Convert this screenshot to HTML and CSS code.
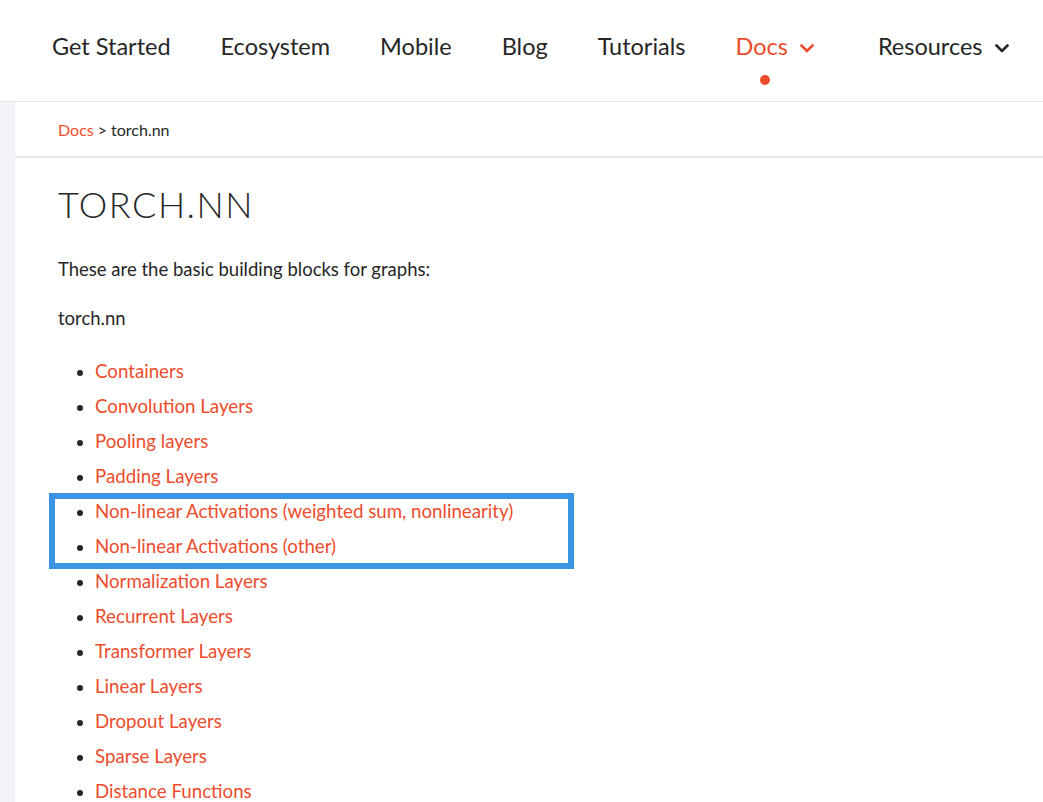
FILE: index.html
```html
<!DOCTYPE html>
<html lang="en">
<head>
<meta charset="utf-8">
<title>torch.nn</title>
<link rel="stylesheet" href="styles.css">
</head>
<body>
<header class="site-header">
  <nav class="main-nav">
    <a class="nav-link" href="#">Get Started</a>
    <a class="nav-link" href="#">Ecosystem</a>
    <a class="nav-link" href="#">Mobile</a>
    <a class="nav-link" href="#">Blog</a>
    <a class="nav-link" href="#">Tutorials</a>
    <a class="nav-link nav-active has-menu" href="#">Docs
      <svg class="chev" viewBox="0 0 14 9" width="14" height="9"><path d="M1.5 1.5 L7 7 L12.5 1.5" fill="none" stroke="currentColor" stroke-width="2.6" stroke-linecap="round" stroke-linejoin="round"/></svg>
      <span class="active-dot"></span>
    </a>
    <a class="nav-link has-menu res" href="#">Resources
      <svg class="chev" viewBox="0 0 14 9" width="14" height="9"><path d="M1.5 1.5 L7 7 L12.5 1.5" fill="none" stroke="currentColor" stroke-width="2.6" stroke-linecap="round" stroke-linejoin="round"/></svg>
    </a>
  </nav>
</header>
<div class="page">
  <aside class="side-strip"></aside>
  <main class="content">
    <div class="breadcrumb"><a href="#" class="crumb-link">Docs</a> &gt; torch.nn</div>
    <article class="article">
      <h1 class="title">TORCH.NN</h1>
      <p class="lead">These are the basic building blocks for graphs:</p>
      <p class="module">torch.nn</p>
      <ul class="toc">
        <li><a href="#">Containers</a></li>
        <li><a href="#">Convolution Layers</a></li>
        <li><a href="#">Pooling layers</a></li>
        <li><a href="#">Padding Layers</a></li>
        <li><a href="#">Non-linear Activations (weighted sum, nonlinearity)</a></li>
        <li><a href="#">Non-linear Activations (other)</a></li>
        <li><a href="#">Normalization Layers</a></li>
        <li><a href="#">Recurrent Layers</a></li>
        <li><a href="#">Transformer Layers</a></li>
        <li><a href="#">Linear Layers</a></li>
        <li><a href="#">Dropout Layers</a></li>
        <li><a href="#">Sparse Layers</a></li>
        <li><a href="#">Distance Functions</a></li>
      </ul>
      <div class="highlight-box"></div>
    </article>
  </main>
</div>
</body>
</html>
```

FILE: styles.css
```css
html, body {
  margin: 0;
  padding: 0;
  background: #ffffff;
  font-family: Lato, "Noto Sans", sans-serif;
  color: #262626;
  overflow: hidden;
  height: 802px;
}

a { text-decoration: none; }

.site-header {
  height: 101px;
  border-bottom: 1px solid #e4e4e4;
  box-sizing: content-box;
}

.main-nav {
  display: flex;
  align-items: center;
  height: 101px;
  padding-left: 52px;
  gap: 50px;
}

.nav-link {
  position: relative;
  font-size: 23.5px;
  color: #262626;
  display: flex;
  align-items: center;
  line-height: 1;
  margin-top: -7px;
  white-space: nowrap;
}

.nav-active { color: #ee4c2c; }

.chev {
  margin-left: 12px;
  margin-top: 2px;
}

.has-menu { margin-right: 14px; }
.res { margin-right: 0; }

.active-dot {
  position: absolute;
  left: 25px;
  top: 40px;
  width: 10px;
  height: 10px;
  border-radius: 50%;
  background: #ee4c2c;
}

.page {
  display: flex;
}

.side-strip {
  width: 15px;
  flex: 0 0 15px;
  background: #f3f4f7;
  min-height: 700px;
}

.content {
  flex: 1;
}

.breadcrumb {
  height: 56px;
  box-sizing: border-box;
  border-bottom: 2px solid #e6e6e6;
  padding-left: 43px;
  display: flex;
  align-items: center;
  font-size: 16px;
  color: #262626;
  gap: 4px;
}

.crumb-link { color: #ee4c2c; }

.article {
  position: relative;
  padding-left: 43px;
  padding-top: 1px;
}

.title {
  margin: 23px 0 0 0;
  font-size: 36px;
  font-weight: 300;
  letter-spacing: 1.5px;
  line-height: 44px;
  color: #262626;
}

.lead {
  margin: 29px 0 0 0;
  font-size: 18.5px;
  line-height: 28px;
}

.module {
  margin: 21px 0 0 0;
  font-size: 18.5px;
  line-height: 28px;
}

.toc {
  margin: 22px 0 0 0;
  padding-left: 37px;
  font-size: 18.7px;
  line-height: 35px;
}

.toc li::marker { color: #262626; font-size: 17px; }

.toc a { color: #ee4c2c; }

.highlight-box {
  position: absolute;
  left: 34px;
  top: 335px;
  width: 525px;
  height: 76px;
  box-sizing: border-box;
  border: 6px solid #3a96e4;
  pointer-events: none;
}
```
